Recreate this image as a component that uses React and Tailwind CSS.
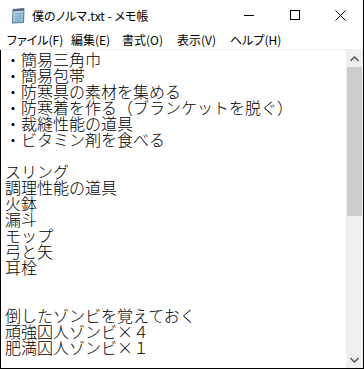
import React from "react";

const lines = [
  "・簡易三角巾",
  "・簡易包帯",
  "・防寒具の素材を集める",
  "・防寒着を作る（ブランケットを脱ぐ）",
  "・裁縫性能の道具",
  "・ビタミン剤を食べる",
  "",
  "スリング",
  "調理性能の道具",
  "火鉢",
  "漏斗",
  "モップ",
  "弓と矢",
  "耳栓",
  "",
  "",
  "倒したゾンビを覚えておく",
  "頑強囚人ゾンビ×４",
  "肥満囚人ゾンビ×１",
];

const menus = [
  { label: "ファイル(F)", w: "w-[64px]" },
  { label: "編集(E)", w: "w-[51px]" },
  { label: "書式(O)", w: "w-[55px]" },
  { label: "表示(V)", w: "w-[53px]" },
  { label: "ヘルプ(H)", w: "w-[60px]" },
];

const NotepadIcon = () => (
  <svg width="16" height="17" viewBox="0 0 16 17">
    <defs>
      <linearGradient id="pad" x1="0" y1="0" x2="1" y2="1">
        <stop offset="0" stopColor="#cfeaf7" />
        <stop offset="1" stopColor="#7fb6d8" />
      </linearGradient>
    </defs>
    <path d="M3 2.5 L14 1.5 L13.5 15.5 L2.5 16 Z" fill="url(#pad)" stroke="#4b6a80" strokeWidth="0.9" />
    <path d="M3 2.5 L14 1.5 L14 3.5 L3 4.5 Z" fill="#56626c" />
    <path d="M4.5 7 L12.5 6.5 M4.5 9.3 L12.5 8.8 M4.5 11.6 L12.5 11.1 M4.5 13.9 L10.5 13.5" stroke="#5d8fb3" strokeWidth="0.8" />
  </svg>
);

const App = () => {
  return (
    <div className="w-[364px] h-[369px] bg-white flex flex-col border-r border-black overflow-hidden font-['Noto_Sans_CJK_JP',sans-serif] text-black">
      {/* Title bar */}
      <div className="h-[30px] flex items-center shrink-0">
        <div className="pl-[10px] pr-[6px] flex items-center">
          <NotepadIcon />
        </div>
        <span className="text-[12px] leading-none [font-feature-settings:'palt'] mt-[1px]">
          僕のノルマ.txt - メモ帳
        </span>
        <div className="ml-auto flex h-full">
          <div className="w-[46px] flex items-center justify-center">
            <div className="w-[10px] h-px bg-black" />
          </div>
          <div className="w-[46px] flex items-center justify-center">
            <div className="w-[10px] h-[10px] border border-black" />
          </div>
          <div className="w-[45px] flex items-center justify-center">
            <svg width="11" height="11" viewBox="0 0 11 11">
              <path d="M0.5 0.5 L10.5 10.5 M10.5 0.5 L0.5 10.5" stroke="#000" strokeWidth="1" />
            </svg>
          </div>
        </div>
      </div>

      {/* Menu bar */}
      <div className="h-[19px] flex items-center pl-[7px] shrink-0">
        {menus.map((m) => (
          <span
            key={m.label}
            className={`${m.w} text-[12px] leading-none whitespace-nowrap [font-feature-settings:'palt']`}
          >
            {m.label}
          </span>
        ))}
      </div>
      <div className="h-px bg-[#f0f0f0] shrink-0" />

      {/* Edit area */}
      <div className="flex-1 flex border-l border-b border-black min-h-0">
        <div className="flex-1 pl-[4px] pt-px font-light">
          {lines.map((line, i) => (
            <div key={i} className="h-4 text-[16px] leading-4 whitespace-nowrap">
              {line || "\u00a0"}
            </div>
          ))}
        </div>

        {/* Scrollbar */}
        <div className="w-[17px] bg-[#f0f0f0] flex flex-col">
          <div className="h-[17px] flex items-center justify-center">
            <svg width="9" height="6" viewBox="0 0 9 6">
              <path d="M0.5 5 L4.5 1 L8.5 5" fill="none" stroke="#606060" strokeWidth="1.6" />
            </svg>
          </div>
          <div className="h-[149px] mx-px bg-[#cdcdcd]" />
          <div className="flex-1" />
          <div className="h-[17px] flex items-center justify-center">
            <svg width="9" height="6" viewBox="0 0 9 6">
              <path d="M0.5 1 L4.5 5 L8.5 1" fill="none" stroke="#606060" strokeWidth="1.6" />
            </svg>
          </div>
        </div>
      </div>
    </div>
  );
};

export default App;
